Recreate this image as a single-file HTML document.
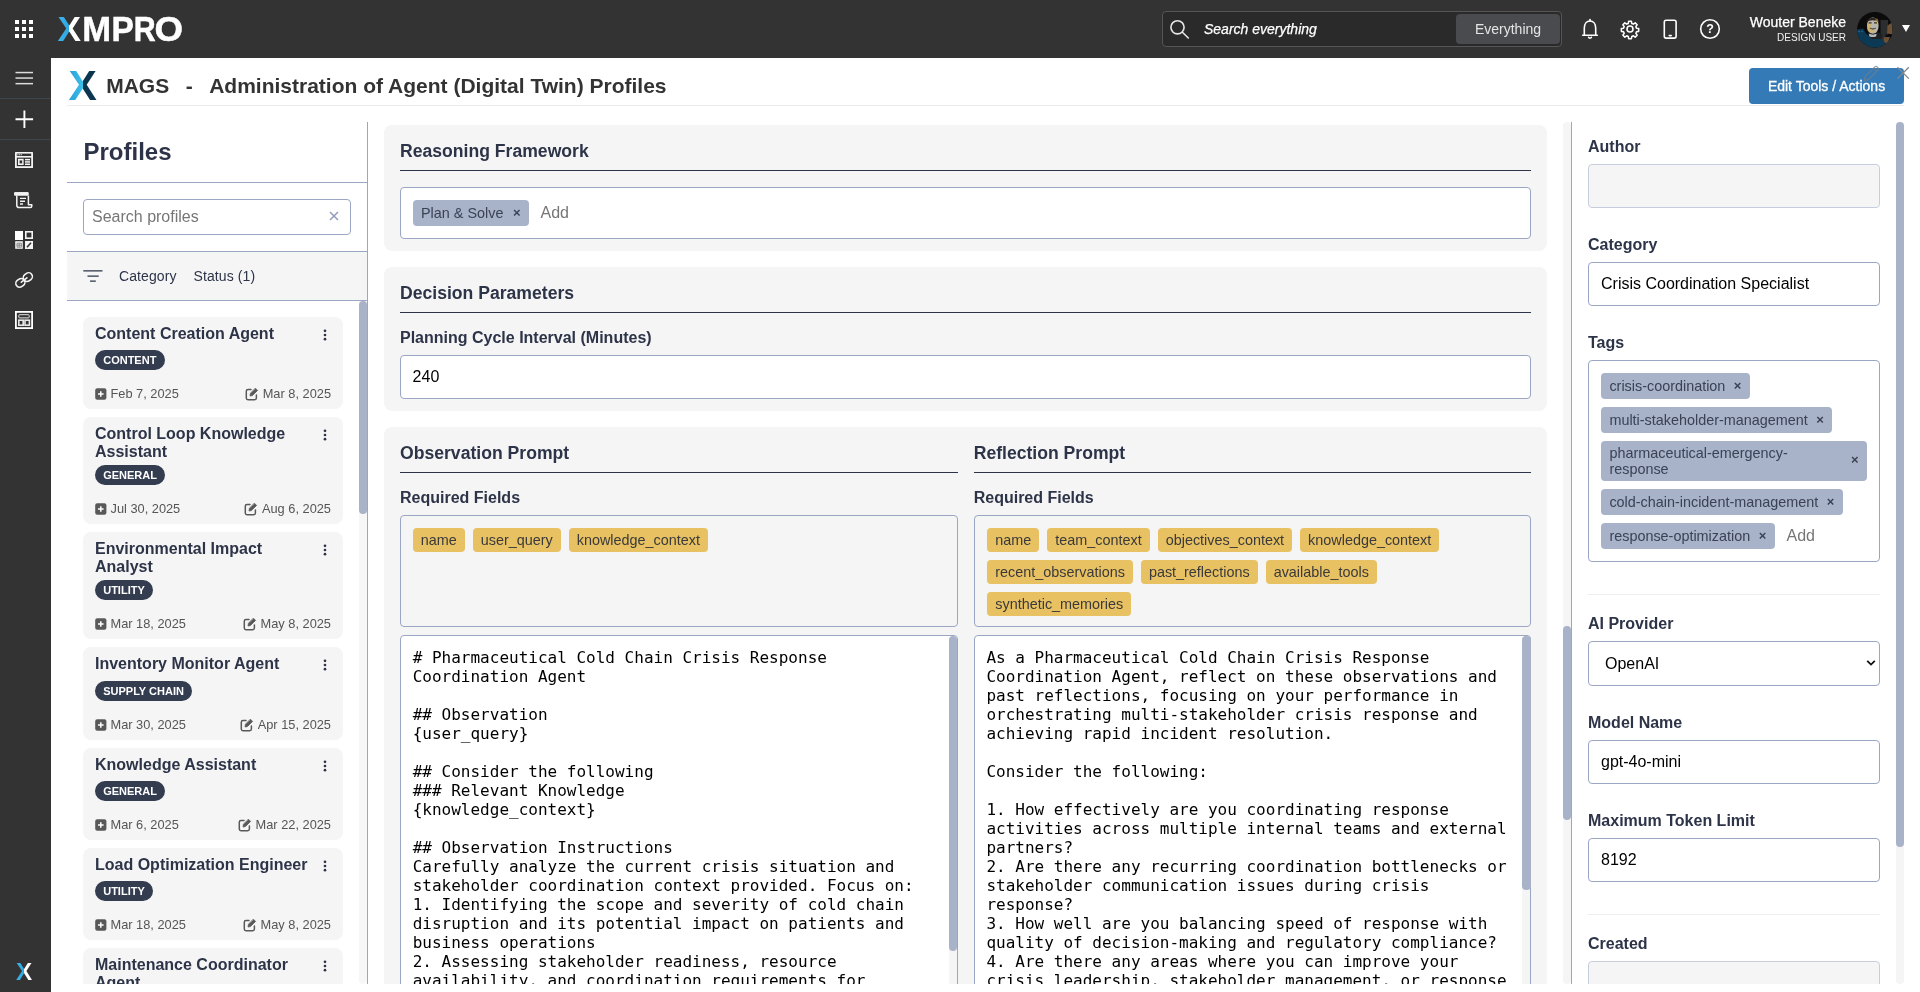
<!DOCTYPE html>
<html lang="en">
<head>
<meta charset="utf-8">
<title>MAGS - Administration of Agent (Digital Twin) Profiles</title>
<style>
*{box-sizing:border-box;margin:0;padding:0}
html,body{width:1920px;height:992px;overflow:hidden;background:#fff;font-family:"Liberation Sans",Arial,sans-serif;color:#2d3448}
.abs{position:absolute}
#topbar{position:absolute;left:0;top:0;width:1920px;height:58px;background:#333}
#leftnav{position:absolute;left:0;top:58px;width:51px;height:934px;background:#333}
#page{position:absolute;left:0;top:0;width:1920px;height:984px;overflow:hidden;will-change:transform}
.hl{position:absolute;height:1px;background:#9aa6c3}
.vl{position:absolute;width:1px;background:#9aa6c3}
.lx{background:linear-gradient(90deg,#3fb4e8 0,#2fa6e0 50%,#fff 50%);-webkit-background-clip:text;background-clip:text;color:transparent;-webkit-text-fill-color:transparent}
.mx{background:linear-gradient(90deg,#2b9fd9 0,#3cc0ea 50%,#0c3650 50%);-webkit-background-clip:text;background-clip:text;color:transparent;-webkit-text-fill-color:transparent}
.ht{top:71.6px;font-size:21px;line-height:28px;font-weight:700;color:#333;white-space:nowrap}
.pc{position:absolute;left:83px;width:260px;background:#f5f5f5;border-radius:8px}
.pt{position:absolute;left:12px;top:8px;font-size:16px;line-height:17.6px;font-weight:700;color:#2d3448;white-space:nowrap}
.pd{position:absolute;left:240px;top:12px}
.pb{position:absolute;left:12px;height:20px;border-radius:10px;background:#343c50;color:#fff;font-size:11px;line-height:20px;font-weight:700;padding:0 8.2px;white-space:nowrap}
.pi1{position:absolute;left:12px}
.pdl{position:absolute;left:27.5px;font-size:12.8px;line-height:15px;color:#555;white-space:nowrap}
.pdr{position:absolute;right:12px;padding-left:17.5px;font-size:12.8px;line-height:15px;color:#555;white-space:nowrap}
.pdr svg{position:absolute;left:0;top:0.3px}
.lg{position:absolute;top:0;text-align:center;display:block}
.lw{-webkit-text-stroke:0.5px #fff}
.mc{position:absolute;left:384px;width:1163px;background:#f5f5f5;border-radius:8px}
.mc>*{position:absolute}
.mh{font-size:17.6px;line-height:21px;font-weight:700;color:#2d3448;white-space:nowrap}
.ml{height:1.3px;background:#2d3448}
.lb{font-size:16px;line-height:20px;font-weight:700;color:#2d3448;white-space:nowrap}
.inp{background:#fff;border:1px solid #9aa6c3;border-radius:4px}
.fb{border:1px solid #9aa6c3;border-radius:4px;padding:12px 4px 0 11.700px;line-height:0}
.yt{display:inline-block;height:24px;line-height:24px;margin:0 8px 8px 0;padding:0 8px;border-radius:4px;background:#e8c163;color:#3a3a3a;font-size:14.4px;white-space:nowrap}
.gt{height:26px;line-height:26px;padding:0 8.4px;border-radius:4px;background:#a8b2c8;color:#3a4254;font-size:14.4px;white-space:nowrap}
.gx{margin-left:8.5px;font-size:13px;font-weight:700;color:#3a4254;position:relative;top:-1px}
.ph{font-size:16px;line-height:20px;color:#767676}
.iv{font-size:16px;line-height:20px;color:#000}
.tx{font-family:"DejaVu Sans Mono","Liberation Mono",monospace;font-size:16px;line-height:19px;color:#000;white-space:pre}
.dis{background:#f5f5f5;border-color:#c6cddc}
.gt2{border-radius:4px;background:#a8b2c8;color:#3a4254;font-size:14.4px}
.gt2 .gl{position:absolute;left:8.4px;top:3.6px;line-height:16px;white-space:nowrap}
.gt2 .gx2{position:absolute;right:8.4px;top:50%;margin-top:-11px;line-height:20px;font-size:13px;font-weight:700;color:#3a4254}

</style>
</head>
<body>
<div id="topbar"></div>
<div id="leftnav"></div>
<div id="page">
<!-- ===== TOP BAR ===== -->
<svg class="abs" style="left:15px;top:20px" width="18" height="18" viewBox="0 0 18 18" fill="#fff">
<rect x="0" y="0" width="4" height="4"/><rect x="7" y="0" width="4" height="4"/><rect x="14" y="0" width="4" height="4"/>
<rect x="0" y="7" width="4" height="4"/><rect x="7" y="7" width="4" height="4"/><rect x="14" y="7" width="4" height="4"/>
<rect x="0" y="14" width="4" height="4"/><rect x="7" y="14" width="4" height="4"/><rect x="14" y="14" width="4" height="4"/>
</svg>
<div class="abs" id="logo" style="left:0;top:9px;width:200px;height:40px;line-height:40px;font-size:35.300px;font-weight:700;color:#fff;white-space:nowrap"><span class="lg lx" style="left:57.500px;width:23.500px">X</span><span class="lg lw" style="left:81.500px;width:29.400px;transform:scaleX(.98)">M</span><span class="lg lw" style="left:110.800px;width:23.500px;transform:scaleX(.95)">P</span><span class="lg lw" style="left:132.400px;width:25.500px;transform:scaleX(.86)">R</span><span class="lg lw" style="left:154.800px;width:27.500px;transform:scaleX(1.04)">O</span></div>
<div class="abs" style="left:1162px;top:11px;width:400px;height:36px;border:1px solid #555;border-radius:4px;background:#2a2a2a"></div>
<svg class="abs" style="left:1168px;top:17px" width="24" height="24" viewBox="0 0 24 24" fill="none" stroke="#e6e6e6" stroke-width="1.6" stroke-linecap="round"><circle cx="9.5" cy="10.3" r="6.6"/><path d="M14.4 15.2 L20.3 21"/></svg>
<div class="abs" style="left:1204px;top:20px;font-size:14px;line-height:18px;font-style:italic;color:#fff;white-space:nowrap;-webkit-text-stroke:0.25px #fff">Search everything</div>
<div class="abs" style="left:1456px;top:14px;width:104px;height:30px;border-radius:4px;background:#4a4b4f;color:#e4e4e4;font-size:14px;line-height:30px;text-align:center">Everything</div>
<!-- bell -->
<svg class="abs" style="left:1578px;top:17px" width="24" height="24" viewBox="0 0 24 24" fill="none" stroke="#fff" stroke-width="1.6" stroke-linejoin="round" stroke-linecap="round"><path d="M6.300 18 V11.200 C6.300 6.800 8.600 4 12 4 S17.700 6.800 17.700 11.200 V18"/><path d="M4.700 18.300 H19.300"/><path d="M10.600 20.300 a1.500 1.500 0 0 0 2.800 0"/><path d="M12 2.500 V4"/></svg>
<!-- gear -->
<svg class="abs" style="left:1618px;top:17px" width="24" height="24" viewBox="0 0 24 24" fill="none" stroke="#fff" stroke-width="1.6" stroke-linejoin="round"><circle cx="12" cy="12" r="3"/><path d="M10.3 2.5h3.4l.5 2.7 1.9.8 2.3-1.6 2.4 2.4-1.6 2.3.8 1.9 2.7.5v3.4l-2.7.5-.8 1.9 1.6 2.3-2.4 2.4-2.3-1.6-1.9.8-.5 2.7h-3.4l-.5-2.7-1.9-.8-2.3 1.6-2.4-2.4 1.6-2.3-.8-1.9-2.7-.5v-3.4l2.7-.5.8-1.9-1.6-2.3 2.4-2.4 2.3 1.6 1.9-.8z" transform="translate(2.3 2.3) scale(0.81)" stroke-width="1.900"/></svg>
<!-- phone -->
<svg class="abs" style="left:1658px;top:17px" width="24" height="24" viewBox="0 0 24 24" fill="none" stroke="#fff" stroke-width="1.6"><rect x="6.300" y="3.300" width="11.800" height="17.800" rx="1.800"/><path d="M11.2 18.6h2" stroke-linecap="round"/></svg>
<!-- help -->
<svg class="abs" style="left:1698px;top:17px" width="24" height="24" viewBox="0 0 24 24" fill="none" stroke="#fff" stroke-width="1.6"><circle cx="12" cy="12" r="9.3"/><text x="12" y="16.4" text-anchor="middle" font-family="Liberation Sans, sans-serif" font-size="12.5" font-weight="700" fill="#fff" stroke="none">?</text></svg>
<div class="abs" style="left:1700px;top:13px;width:146px;text-align:right;font-size:14px;line-height:18px;color:#fff;white-space:nowrap;-webkit-text-stroke:0.25px #fff">Wouter Beneke</div>
<div class="abs" style="left:1700px;top:31px;width:146px;text-align:right;font-size:10px;line-height:13px;color:#f2f2f2;white-space:nowrap">DESIGN USER</div>
<svg class="abs" id="avatar" style="left:1857px;top:12px" width="36" height="36" viewBox="0 0 36 36">
<defs><clipPath id="avc"><circle cx="17.8" cy="17.7" r="17.8"/></clipPath></defs>
<g clip-path="url(#avc)">
<rect width="36" height="36" fill="#0b0b0c"/>
<rect x="23.500" y="8" width="7.500" height="24" fill="#2c2d2f"/>
<path d="M30.500 13.500L35 10.500L36 22.500L30 21.500z" fill="#6d5236"/>
<path d="M26.500 25.500L33 24.500L31 31.500L27 30.500z" fill="#6a5136"/>
<path d="M28.500 22.500h7v2.500h-7z" fill="#0b0b0c"/>
<path d="M0 17.500L6 16.500L9 21.500L14 25.500L23 26.500L28 30.500L28 36L0 36z" fill="#0c3a55"/>
<path d="M10 21.500L13 19.500L21 20L25.500 23L24 27L15 27z" fill="#1d1f22"/>
<rect x="12" y="20.500" width="7.500" height="4.500" rx="2" fill="#b8b8b8"/>
<ellipse cx="15.800" cy="13.800" rx="5.800" ry="8.300" fill="#b9b6b0"/>
<path d="M9.500 10.500C9.500 4.500 22 4.500 22 10.500C19 7.500 12.500 7.500 9.500 10.500z" fill="#2a2320"/>
<ellipse cx="12.200" cy="15" rx="2.200" ry="4.500" fill="#d9b24a" opacity=".55"/>
<ellipse cx="19.800" cy="9.500" rx="1.500" ry="3" fill="#d9b24a" opacity=".5"/>
<ellipse cx="15.500" cy="19" rx="3" ry="1.800" fill="#d9b24a" opacity=".45"/>
<rect x="11.600" y="10.300" width="3" height="1.200" fill="#3a2a20"/><rect x="17" y="10.300" width="3" height="1.200" fill="#3a2a20"/>
<path d="M12.800 16.200Q15.800 18.200 18.800 16.200Q15.800 17.200 12.800 16.200z" fill="#4a4038" stroke="#4a4038" stroke-width=".6"/>
<path d="M11.500 21.200Q15.800 23.200 20 21.200" stroke="#1d1f22" stroke-width="1" fill="none"/>
<circle cx="2" cy="19.500" r=".7" fill="#2f7fb5"/><circle cx="5" cy="19.500" r=".7" fill="#2f7fb5"/>
</g></svg>
<svg class="abs" style="left:1902px;top:25px" width="8" height="7" viewBox="0 0 8 7"><path d="M0 0h8L4 7z" fill="#fff"/></svg>

<!-- ===== LEFT NAV ===== -->
<svg class="abs" style="left:15px;top:71px" width="19" height="15" viewBox="0 0 19 15" fill="#dcdcdc"><rect x="0.5" y="0.8" width="17.5" height="1.5"/><rect x="0.5" y="6.3" width="17.5" height="1.5"/><rect x="0.5" y="11.9" width="17.5" height="1.5"/></svg>
<div class="abs" style="left:0;top:98px;width:51px;height:1px;background:#3e464d"></div>
<svg class="abs" style="left:14px;top:109px" width="20" height="20" viewBox="0 0 20 20" stroke="#fff" stroke-width="1.9" fill="none"><path d="M10.4 1.4v17.6M1.5 10.2h17.6"/></svg>
<div class="abs" style="left:0;top:139px;width:51px;height:1px;background:#3e464d"></div>
<!-- icon 3: window layout -->
<svg class="abs" style="left:15px;top:152px" width="18" height="16" viewBox="0 0 18 16"><rect x="0" y="0" width="18" height="16" rx="0.6" fill="#f4f4f4"/><rect x="1.8" y="1.6" width="14.4" height="2.4" fill="#333"/><rect x="2.4" y="2.2" width="1.1" height="1.1" fill="#ddd"/><rect x="4.1" y="2.2" width="1.1" height="1.1" fill="#ddd"/><rect x="5.8" y="2.2" width="1.1" height="1.1" fill="#ddd"/><rect x="1.8" y="5.6" width="14.4" height="8.6" fill="#333"/><rect x="3" y="6.8" width="5.6" height="6.2" fill="#f4f4f4"/><rect x="4.6" y="8.4" width="2.6" height="3" fill="#333"/><rect x="10" y="6.9" width="5" height="1.5" fill="#f4f4f4"/><rect x="10" y="9.2" width="5" height="1.5" fill="#f4f4f4"/><rect x="10" y="11.5" width="5" height="1.5" fill="#f4f4f4"/></svg>
<!-- icon 4: scroll -->
<svg class="abs" style="left:13.4px;top:191px" width="20" height="18" viewBox="0 0 20 18" fill="none" stroke="#f4f4f4" stroke-width="1.5" stroke-linejoin="round"><path d="M1.6 1.6h13.6v2.6H1.6z" fill="#f4f4f4" stroke-width="1"/><path d="M3.8 4.4v9.8c0 1.4 1 2.4 2.4 2.4h11.2c.9 0 1.4-.6 1.4-1.6v-1.2h-3.4V4.4"/><path d="M7 7.4h6M7 10.2h5M7 13h3" stroke-width="1.4"/></svg>
<!-- icon 5: dashboard -->
<svg class="abs" style="left:15px;top:231px" width="18" height="18" viewBox="0 0 18 18"><rect x="0" y="0" width="8" height="9" fill="#fff"/><rect x="10" y="0" width="8" height="8" fill="#f4f4f4"/><rect x="11.6" y="1.6" width="4.8" height="4.8" fill="#333"/><rect x="0.2" y="10.2" width="7.600" height="7.600" fill="#f2f2f2"/><path d="M2 12.200h4.400v4H2zM2 14.200h4.400M4.200 12.200v4" stroke="#666" stroke-width="0.700" fill="none"/><rect x="10" y="10" width="8" height="8" fill="#f4f4f4"/><path d="M12 16.2l4-4.4" stroke="#333" stroke-width="1.6"/></svg>
<!-- icon 6: link -->
<svg class="abs" style="left:14px;top:270px" width="20" height="20" viewBox="0 0 20 20" fill="none" stroke="#f4f4f4" stroke-width="1.7" stroke-linecap="round"><g transform="translate(10.1 10) scale(0.93) translate(-10 -10) rotate(-38 10 10)"><rect x="-0.2" y="5.9" width="10.2" height="8.2" rx="4.1"/><rect x="10" y="5.9" width="10.2" height="8.2" rx="4.1"/><path d="M6.2 10h7.6"/></g></svg>
<!-- icon 7: calc -->
<svg class="abs" style="left:15px;top:311px" width="18" height="18" viewBox="0 0 18 18" fill="none"><rect x="0.9" y="0.9" width="16.2" height="16.2" stroke="#fff" stroke-width="1.8"/><rect x="3.8" y="3.7" width="10.4" height="3.2" rx="0.8" stroke="#e6e6e6" stroke-width="1"/><rect x="3.8" y="9.2" width="4.4" height="5" stroke="#e6e6e6" stroke-width="1.6"/><rect x="10" y="9.2" width="4.4" height="5" stroke="#e6e6e6" stroke-width="1.6"/></svg>
<div class="abs" style="left:13.5px;top:958px;width:21px;height:28px;line-height:28px;font-size:24.3px;font-weight:700;text-align:center"><span class="lx">X</span></div>

<!-- ===== HEADER ===== -->
<div class="abs" style="left:67px;top:105px;width:1837px;height:1px;background:#ebebeb"></div>
<div class="abs" id="magsx" style="left:68.6px;top:61.5px;height:48px;line-height:48px;font-size:42.5px;font-weight:700"><span class="mx">X</span></div>
<div class="abs ht" style="left:106.2px">MAGS</div>
<div class="abs ht" style="left:185.8px">-</div>
<div class="abs ht" style="left:209.2px">Administration of Agent (Digital Twin) Profiles</div>
<div class="abs" style="left:1749px;top:68px;width:155px;height:36px;border-radius:4px;background:#337ab7;color:#fff;font-size:14px;line-height:36px;text-align:center;white-space:nowrap;-webkit-text-stroke:0.3px #fff">Edit Tools / Actions</div>
<svg class="abs" style="left:1861px;top:64px" width="20" height="20" viewBox="0 0 20 20" fill="none" stroke="#6f7f8c" stroke-width="1.1" stroke-linejoin="round" opacity="0.8"><path d="M3 16.6l1.2-4.2L13.8 2.8a1.6 1.6 0 0 1 2.3 0l.9.9a1.6 1.6 0 0 1 0 2.3L7.4 15.6z"/><path d="M12.4 4.2l3.2 3.2"/></svg>
<svg class="abs" style="left:1896px;top:66px" width="14" height="14" viewBox="0 0 14 14" fill="none" stroke="#808890" stroke-width="1.3"><path d="M1.5 1.2l11.3 11.4M12.8 1.2L1.5 12.6"/></svg>
<!-- ===== PROFILES PANEL ===== -->
<div class="vl" style="left:367px;top:122px;height:862px"></div>
<div class="abs" style="left:83.5px;top:138px;font-size:24px;line-height:28px;font-weight:700;color:#2d3448">Profiles</div>
<div class="hl" style="left:67px;top:182px;width:300px"></div>
<div class="abs" style="left:83px;top:199px;width:268px;height:36px;border:1px solid #9aa6c3;border-radius:4px;background:#fff"></div>
<div class="abs" style="left:92px;top:207px;font-size:16px;line-height:20px;color:#767676;white-space:nowrap">Search profiles</div>
<svg class="abs" style="left:329px;top:211px" width="10" height="10" viewBox="0 0 10 10" fill="none" stroke="#8f9cbc" stroke-width="1.5"><path d="M1 1l8 8M9 1L1 9"/></svg>
<div class="hl" style="left:67px;top:251px;width:300px"></div>
<div class="abs" style="left:67px;top:252px;width:300px;height:48px;background:#f5f5f5"></div>
<svg class="abs" style="left:83px;top:269px" width="20" height="14" viewBox="0 0 20 14" fill="none" stroke="#2d3448" stroke-width="1.3"><path d="M0.3 1.8h19.2M4.5 7.2h11.2M7 12.2h5.8"/></svg>
<div class="abs" style="left:119px;top:268px;font-size:14px;line-height:16px;color:#2d3448;white-space:nowrap;letter-spacing:0.1px">Category</div>
<div class="abs" style="left:193.5px;top:268px;font-size:14px;line-height:16px;color:#2d3448;white-space:nowrap;letter-spacing:0.1px">Status (1)</div>
<div class="hl" style="left:67px;top:300px;width:300px"></div>
<div class="abs" style="left:359px;top:301px;width:8px;height:683px;background:#f7f7f7;border-radius:0 0 4px 4px"></div>
<div class="abs" style="left:359px;top:301px;width:8px;height:213px;background:#a8b2c8;border-radius:4px"></div>

<div class="pc" style="top:317.0px;height:92px"><div class="pt">Content Creation Agent</div><svg class="pd" width="4" height="12" viewBox="0 0 4 12" fill="#2d3448"><circle cx="2" cy="1.800" r="1.350"/><circle cx="2" cy="6" r="1.350"/><circle cx="2" cy="10.200" r="1.350"/></svg><div class="pb" style="top:33.3px">CONTENT</div><svg class="pi1" style="top:71.3px" width="12" height="12" viewBox="0 0 12 12"><rect x="0.2" y="0.3" width="11.2" height="11.4" rx="2" fill="#595959"/><path d="M5.8 3.2v5.6M3 6h5.6" stroke="#fff" stroke-width="1.5"/></svg><div class="pdl" style="top:69.3px">Feb 7, 2025</div><div class="pdr" style="top:69.3px"><svg width="14" height="14" viewBox="0 0 14 14" fill="none" stroke="#595959" stroke-width="1.5" stroke-linejoin="round" stroke-linecap="round"><path d="M6 2.6H3A1.7 1.7 0 0 0 1.3 4.300V11A1.700 1.700 0 0 0 3 12.700H9.700A1.700 1.700 0 0 0 11.400 11V8"/><path d="M10.600 1.400l2 2L7.400 8.600 5 9l.4-2.400z" fill="#595959" stroke-width="0.800"/></svg>Mar 8, 2025</div></div>
<div class="pc" style="top:417.0px;height:107px"><div class="pt">Control Loop Knowledge<br>Assistant</div><svg class="pd" width="4" height="12" viewBox="0 0 4 12" fill="#2d3448"><circle cx="2" cy="1.800" r="1.350"/><circle cx="2" cy="6" r="1.350"/><circle cx="2" cy="10.200" r="1.350"/></svg><div class="pb" style="top:48.3px">GENERAL</div><svg class="pi1" style="top:86.3px" width="12" height="12" viewBox="0 0 12 12"><rect x="0.2" y="0.3" width="11.2" height="11.4" rx="2" fill="#595959"/><path d="M5.8 3.2v5.6M3 6h5.6" stroke="#fff" stroke-width="1.5"/></svg><div class="pdl" style="top:84.3px">Jul 30, 2025</div><div class="pdr" style="top:84.3px"><svg width="14" height="14" viewBox="0 0 14 14" fill="none" stroke="#595959" stroke-width="1.5" stroke-linejoin="round" stroke-linecap="round"><path d="M6 2.6H3A1.7 1.7 0 0 0 1.3 4.300V11A1.700 1.700 0 0 0 3 12.700H9.700A1.700 1.700 0 0 0 11.400 11V8"/><path d="M10.600 1.400l2 2L7.400 8.600 5 9l.4-2.400z" fill="#595959" stroke-width="0.800"/></svg>Aug 6, 2025</div></div>
<div class="pc" style="top:532.0px;height:107px"><div class="pt">Environmental Impact<br>Analyst</div><svg class="pd" width="4" height="12" viewBox="0 0 4 12" fill="#2d3448"><circle cx="2" cy="1.800" r="1.350"/><circle cx="2" cy="6" r="1.350"/><circle cx="2" cy="10.200" r="1.350"/></svg><div class="pb" style="top:48.3px">UTILITY</div><svg class="pi1" style="top:86.3px" width="12" height="12" viewBox="0 0 12 12"><rect x="0.2" y="0.3" width="11.2" height="11.4" rx="2" fill="#595959"/><path d="M5.8 3.2v5.6M3 6h5.6" stroke="#fff" stroke-width="1.5"/></svg><div class="pdl" style="top:84.3px">Mar 18, 2025</div><div class="pdr" style="top:84.3px"><svg width="14" height="14" viewBox="0 0 14 14" fill="none" stroke="#595959" stroke-width="1.5" stroke-linejoin="round" stroke-linecap="round"><path d="M6 2.6H3A1.7 1.7 0 0 0 1.3 4.300V11A1.700 1.700 0 0 0 3 12.700H9.700A1.700 1.700 0 0 0 11.400 11V8"/><path d="M10.600 1.400l2 2L7.400 8.600 5 9l.4-2.400z" fill="#595959" stroke-width="0.800"/></svg>May 8, 2025</div></div>
<div class="pc" style="top:647.0px;height:93px"><div class="pt">Inventory Monitor Agent</div><svg class="pd" width="4" height="12" viewBox="0 0 4 12" fill="#2d3448"><circle cx="2" cy="1.800" r="1.350"/><circle cx="2" cy="6" r="1.350"/><circle cx="2" cy="10.200" r="1.350"/></svg><div class="pb" style="top:34.3px">SUPPLY CHAIN</div><svg class="pi1" style="top:72.3px" width="12" height="12" viewBox="0 0 12 12"><rect x="0.2" y="0.3" width="11.2" height="11.4" rx="2" fill="#595959"/><path d="M5.8 3.2v5.6M3 6h5.6" stroke="#fff" stroke-width="1.5"/></svg><div class="pdl" style="top:70.3px">Mar 30, 2025</div><div class="pdr" style="top:70.3px"><svg width="14" height="14" viewBox="0 0 14 14" fill="none" stroke="#595959" stroke-width="1.5" stroke-linejoin="round" stroke-linecap="round"><path d="M6 2.6H3A1.7 1.7 0 0 0 1.3 4.300V11A1.700 1.700 0 0 0 3 12.700H9.700A1.700 1.700 0 0 0 11.400 11V8"/><path d="M10.600 1.400l2 2L7.400 8.600 5 9l.4-2.400z" fill="#595959" stroke-width="0.800"/></svg>Apr 15, 2025</div></div>
<div class="pc" style="top:748.0px;height:92px"><div class="pt">Knowledge Assistant</div><svg class="pd" width="4" height="12" viewBox="0 0 4 12" fill="#2d3448"><circle cx="2" cy="1.800" r="1.350"/><circle cx="2" cy="6" r="1.350"/><circle cx="2" cy="10.200" r="1.350"/></svg><div class="pb" style="top:33.3px">GENERAL</div><svg class="pi1" style="top:71.3px" width="12" height="12" viewBox="0 0 12 12"><rect x="0.2" y="0.3" width="11.2" height="11.4" rx="2" fill="#595959"/><path d="M5.8 3.2v5.6M3 6h5.6" stroke="#fff" stroke-width="1.5"/></svg><div class="pdl" style="top:69.3px">Mar 6, 2025</div><div class="pdr" style="top:69.3px"><svg width="14" height="14" viewBox="0 0 14 14" fill="none" stroke="#595959" stroke-width="1.5" stroke-linejoin="round" stroke-linecap="round"><path d="M6 2.6H3A1.7 1.7 0 0 0 1.3 4.300V11A1.700 1.700 0 0 0 3 12.700H9.700A1.700 1.700 0 0 0 11.400 11V8"/><path d="M10.600 1.400l2 2L7.400 8.600 5 9l.4-2.400z" fill="#595959" stroke-width="0.800"/></svg>Mar 22, 2025</div></div>
<div class="pc" style="top:848.0px;height:92px"><div class="pt">Load Optimization Engineer</div><svg class="pd" width="4" height="12" viewBox="0 0 4 12" fill="#2d3448"><circle cx="2" cy="1.800" r="1.350"/><circle cx="2" cy="6" r="1.350"/><circle cx="2" cy="10.200" r="1.350"/></svg><div class="pb" style="top:33.3px">UTILITY</div><svg class="pi1" style="top:71.3px" width="12" height="12" viewBox="0 0 12 12"><rect x="0.2" y="0.3" width="11.2" height="11.4" rx="2" fill="#595959"/><path d="M5.8 3.2v5.6M3 6h5.6" stroke="#fff" stroke-width="1.5"/></svg><div class="pdl" style="top:69.3px">Mar 18, 2025</div><div class="pdr" style="top:69.3px"><svg width="14" height="14" viewBox="0 0 14 14" fill="none" stroke="#595959" stroke-width="1.5" stroke-linejoin="round" stroke-linecap="round"><path d="M6 2.6H3A1.7 1.7 0 0 0 1.3 4.300V11A1.700 1.700 0 0 0 3 12.700H9.700A1.700 1.700 0 0 0 11.400 11V8"/><path d="M10.600 1.400l2 2L7.400 8.600 5 9l.4-2.400z" fill="#595959" stroke-width="0.800"/></svg>May 8, 2025</div></div>
<div class="pc" style="top:948.0px;height:107px"><div class="pt">Maintenance Coordinator<br>Agent</div><svg class="pd" width="4" height="12" viewBox="0 0 4 12" fill="#2d3448"><circle cx="2" cy="1.800" r="1.350"/><circle cx="2" cy="6" r="1.350"/><circle cx="2" cy="10.200" r="1.350"/></svg><div class="pb" style="top:48.3px">UTILITY</div><svg class="pi1" style="top:86.3px" width="12" height="12" viewBox="0 0 12 12"><rect x="0.2" y="0.3" width="11.2" height="11.4" rx="2" fill="#595959"/><path d="M5.8 3.2v5.6M3 6h5.6" stroke="#fff" stroke-width="1.5"/></svg><div class="pdl" style="top:84.3px">Mar 2, 2025</div><div class="pdr" style="top:84.3px"><svg width="14" height="14" viewBox="0 0 14 14" fill="none" stroke="#595959" stroke-width="1.5" stroke-linejoin="round" stroke-linecap="round"><path d="M6 2.6H3A1.7 1.7 0 0 0 1.3 4.300V11A1.700 1.700 0 0 0 3 12.700H9.700A1.700 1.700 0 0 0 11.400 11V8"/><path d="M10.600 1.400l2 2L7.400 8.600 5 9l.4-2.400z" fill="#595959" stroke-width="0.800"/></svg>Apr 9, 2025</div></div>
<!-- ===== MIDDLE ===== -->
<div class="abs" style="left:1563px;top:122px;width:8px;height:862px;background:#f5f5f5;border-radius:4px"></div>
<div class="abs" style="left:1563px;top:625.5px;width:8px;height:194.500px;background:#a8b2c8;border-radius:4px"></div>
<div class="mc" style="top:124.8px;height:126px">
 <div class="mh" style="left:16px;top:16px">Reasoning Framework</div>
 <div class="ml" style="left:16px;top:45.2px;width:1131px"></div>
 <div class="inp" style="left:16px;top:62.4px;width:1131px;height:52.2px"></div>
 <div class="gt" style="left:28.6px;top:75.2px">Plan &amp; Solve<span class="gx" style="margin-left:9.500px">×</span></div>
 <div class="ph" style="left:156.5px;top:78px">Add</div>
</div>
<div class="mc" style="top:266.8px;height:144px">
 <div class="mh" style="left:16px;top:16px">Decision Parameters</div>
 <div class="ml" style="left:16px;top:45.2px;width:1131px"></div>
 <div class="lb" style="left:16px;top:61.4px">Planning Cycle Interval (Minutes)</div>
 <div class="inp" style="left:16px;top:88.4px;width:1131px;height:43.6px"></div>
 <div class="iv" style="left:28.6px;top:100.2px">240</div>
</div>
<div class="mc" style="top:426.8px;height:620px">
 <div class="mh" style="left:16px;top:16px">Observation Prompt</div>
 <div class="ml" style="left:16px;top:45.2px;width:557.5px"></div>
 <div class="lb" style="left:16px;top:61.4px">Required Fields</div>
 <div class="fb" style="left:16px;top:88.4px;width:557.5px;height:112.2px"><span class="yt">name</span><span class="yt">user_query</span><span class="yt">knowledge_context</span></div>
 <div class="inp" style="left:16px;top:207.9px;width:557.5px;height:400px"></div>
 <div class="abs" style="left:565px;top:208.9px;width:7.500px;height:400px;background:#f5f5f5;border-radius:4px"></div>
 <div class="abs" style="left:565px;top:208.9px;width:8.300px;height:315.500px;background:#a8b2c8;border-radius:4px"></div>
 <pre class="tx" style="left:28.7px;top:221.4px"># Pharmaceutical Cold Chain Crisis Response
Coordination Agent

## Observation
{user_query}

## Consider the following
### Relevant Knowledge
{knowledge_context}

## Observation Instructions
Carefully analyze the current crisis situation and
stakeholder coordination context provided. Focus on:
1. Identifying the scope and severity of cold chain
disruption and its potential impact on patients and
business operations
2. Assessing stakeholder readiness, resource
availability, and coordination requirements for
effective crisis response</pre>
 <div class="mh" style="left:589.7px;top:16px">Reflection Prompt</div>
 <div class="ml" style="left:589.7px;top:45.2px;width:557.3px"></div>
 <div class="lb" style="left:589.7px;top:61.4px">Required Fields</div>
 <div class="fb" style="left:589.7px;top:88.4px;width:557.3px;height:112.2px;padding-left:12.600px"><span class="yt">name</span><span class="yt">team_context</span><span class="yt">objectives_context</span><span class="yt">knowledge_context</span><span class="yt">recent_observations</span><span class="yt">past_reflections</span><span class="yt">available_tools</span><span class="yt">synthetic_memories</span></div>
 <div class="inp" style="left:589.7px;top:207.9px;width:557.3px;height:400px"></div>
 <div class="abs" style="left:1138.4px;top:208.9px;width:7.600px;height:400px;background:#f5f5f5;border-radius:4px"></div>
 <div class="abs" style="left:1138.4px;top:208.9px;width:8.300px;height:254px;background:#a8b2c8;border-radius:4px"></div>
 <pre class="tx" style="left:602.4px;top:221.4px">As a Pharmaceutical Cold Chain Crisis Response
Coordination Agent, reflect on these observations and
past reflections, focusing on your performance in
orchestrating multi-stakeholder crisis response and
achieving rapid incident resolution.

Consider the following:

1. How effectively are you coordinating response
activities across multiple internal teams and external
partners?
2. Are there any recurring coordination bottlenecks or
stakeholder communication issues during crisis
response?
3. How well are you balancing speed of response with
quality of decision-making and regulatory compliance?
4. Are there any areas where you can improve your
crisis leadership, stakeholder management, or response
effectiveness?</pre>
</div>

<!-- ===== RIGHT ===== -->
<div class="vl" style="left:1571px;top:122px;height:862px"></div>
<div class="abs" style="left:1896px;top:122px;width:8px;height:862px;background:#f5f5f5;border-radius:4px"></div>
<div class="abs" style="left:1896px;top:122px;width:8px;height:725px;background:#a8b2c8;border-radius:4px"></div>
<div class="lb abs" style="left:1588px;top:136.6px">Author</div>
<div class="inp abs dis" style="left:1588px;top:164.2px;width:292px;height:43.6px"></div>
<div class="lb abs" style="left:1588px;top:234.6px">Category</div>
<div class="inp abs" style="left:1588px;top:262.2px;width:292px;height:43.6px"></div><div class="iv abs" style="left:1601px;top:273.8px">Crisis Coordination Specialist</div>
<div class="lb abs" style="left:1588px;top:332.6px">Tags</div>
<div class="inp abs" style="left:1588px;top:360.2px;width:292px;height:201.6px"></div>
<div class="gt abs" style="left:1601px;top:373.1px;height:25.7px;line-height:25.7px;padding-top:1px">crisis-coordination<span class="gx">×</span></div>
<div class="gt abs" style="left:1601px;top:407.2px;height:25.7px;line-height:25.7px;padding-top:1px">multi-stakeholder-management<span class="gx">×</span></div>
<div class="gt2 abs" style="left:1601px;top:441.2px;height:40.2px;width:266px"><div class="gl">pharmaceutical-emergency-<br>response</div><span class="gx2">×</span></div>
<div class="gt abs" style="left:1601px;top:489.4px;height:25.7px;line-height:25.7px;padding-top:1px">cold-chain-incident-management<span class="gx">×</span></div>
<div class="gt abs" style="left:1601px;top:523.2px;height:25.7px;line-height:25.7px;padding-top:1px">response-optimization<span class="gx">×</span></div>
<div class="ph abs" style="left:1786.5px;top:525.6px">Add</div>
<div class="abs" style="left:1588px;top:594px;width:292px;height:1px;background:#eee"></div>
<div class="lb abs" style="left:1588px;top:614.2px">AI Provider</div>
<div class="inp abs" style="left:1588px;top:641.4px;width:292px;height:44.2px"></div><div class="iv abs" style="left:1605px;top:654.4px">OpenAI</div>
<svg class="abs" style="left:1866px;top:659px" width="10" height="8" viewBox="0 0 10 8" fill="none" stroke="#111" stroke-width="1.8"><path d="M1.200 1.800l3.800 3.800 3.800-3.800"/></svg>
<div class="lb abs" style="left:1588px;top:712.7px">Model Name</div>
<div class="inp abs" style="left:1588px;top:740.2px;width:292px;height:43.6px"></div><div class="iv abs" style="left:1601px;top:751.8px">gpt-4o-mini</div>
<div class="lb abs" style="left:1588px;top:810.7px">Maximum Token Limit</div>
<div class="inp abs" style="left:1588px;top:838.2px;width:292px;height:43.6px"></div><div class="iv abs" style="left:1601px;top:849.8px">8192</div>
<div class="abs" style="left:1588px;top:914px;width:292px;height:1px;background:#eee"></div>
<div class="lb abs" style="left:1588px;top:934.2px">Created</div>
<div class="inp abs dis" style="left:1588px;top:961.2px;width:292px;height:43.6px"></div>
</div>
</body>
</html>
